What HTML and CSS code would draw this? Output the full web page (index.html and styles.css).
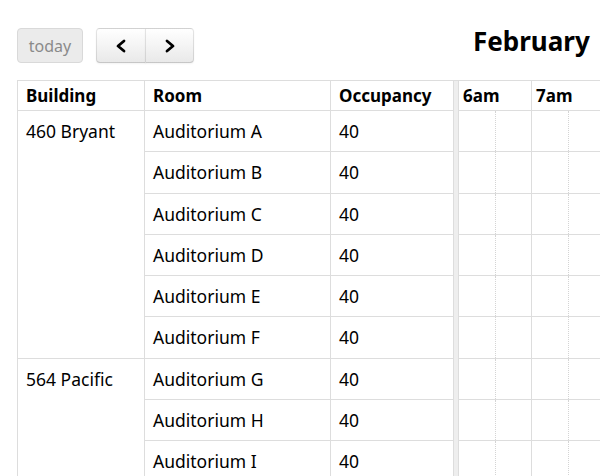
FILE: index.html
```html
<!DOCTYPE html>
<html lang="en">
<head>
    <meta charset="UTF-8">
    <title>Resource Timeline</title>
    <link rel="stylesheet" href="styles.css">
</head>
<body>

    <div class="calendar">
        <div class="toolbar">
            <button class="button today" disabled>today</button>
            <div class="nav-group">
                <button class="button nav prev">
                    <svg width="12" height="14" viewBox="0 0 12 14"><polyline points="9,2 3,7 9,12" /></svg>
                </button>
                <button class="button nav next">
                    <svg width="12" height="14" viewBox="0 0 12 14"><polyline points="3,2 9,7 3,12" /></svg>
                </button>
            </div>
            <h2 class="title">February</h2>
        </div>

        <div class="view">
            <div class="resources">
                <div class="cell head">Building</div>
                <div class="cell head">Room</div>
                <div class="cell head last">Occupancy</div>

                <div class="cell group six">460 Bryant</div>
                <div class="cell">Auditorium A</div><div class="cell last">40</div>
                <div class="cell">Auditorium B</div><div class="cell last">40</div>
                <div class="cell">Auditorium C</div><div class="cell last">40</div>
                <div class="cell">Auditorium D</div><div class="cell last">40</div>
                <div class="cell">Auditorium E</div><div class="cell last">40</div>
                <div class="cell">Auditorium F</div><div class="cell last">40</div>

                <div class="cell group three">564 Pacific</div>
                <div class="cell">Auditorium G</div><div class="cell last">40</div>
                <div class="cell">Auditorium H</div><div class="cell last">40</div>
                <div class="cell">Auditorium I</div><div class="cell last">40</div>
            </div>

            <div class="divider"></div>

            <div class="timeline">
                <div class="time-head">
                    <div class="slot-label">6am</div>
                    <div class="slot-label">7am</div>
                </div>
                <div class="time-row"><div class="slot"></div><div class="slot"></div><div class="slot"></div><div class="slot"></div></div>
                <div class="time-row"><div class="slot"></div><div class="slot"></div><div class="slot"></div><div class="slot"></div></div>
                <div class="time-row"><div class="slot"></div><div class="slot"></div><div class="slot"></div><div class="slot"></div></div>
                <div class="time-row"><div class="slot"></div><div class="slot"></div><div class="slot"></div><div class="slot"></div></div>
                <div class="time-row"><div class="slot"></div><div class="slot"></div><div class="slot"></div><div class="slot"></div></div>
                <div class="time-row"><div class="slot"></div><div class="slot"></div><div class="slot"></div><div class="slot"></div></div>
                <div class="time-row"><div class="slot"></div><div class="slot"></div><div class="slot"></div><div class="slot"></div></div>
                <div class="time-row"><div class="slot"></div><div class="slot"></div><div class="slot"></div><div class="slot"></div></div>
                <div class="time-row"><div class="slot"></div><div class="slot"></div><div class="slot"></div><div class="slot"></div></div>
            </div>
        </div>
    </div>

</body>
</html>
```

FILE: styles.css
```css
/* Calendar look */
:root {
    --border: #ddd;
    --divider: #eee;
    --text: #000;
}

html, body {
    height: 476px;
}

body {
    margin: 0;
    overflow: hidden;
    font-family: "Noto Sans", "DejaVu Sans", sans-serif;
    color: var(--text);
    background: #fff;
}

.calendar {
    padding: 28px 0 0 17px;
}

/* Toolbar */
.toolbar {
    display: flex;
    align-items: flex-start;
    height: 35px;
    margin-bottom: 17px;
    white-space: nowrap;
}

.button {
    box-sizing: border-box;
    height: 35px;
    margin: 0;
    padding: 0 10px;
    font-family: "Noto Sans", "DejaVu Sans", sans-serif;
    font-size: 16px;
    color: #333;
    background: linear-gradient(#fff, #e9e9e9);
    border: 1px solid rgba(0, 0, 0, 0.1);
    border-bottom-color: rgba(0, 0, 0, 0.22);
    border-radius: 4px;
    box-shadow: inset 0 1px 0 rgba(255, 255, 255, 0.2), 0 1px 2px rgba(0, 0, 0, 0.05);
}

.today {
    width: 66px;
    color: #8a8a8a;
    background: #ebebeb;
    border-color: #d9d9d9;
    box-shadow: none;
}

.nav-group {
    display: flex;
    margin-left: 13px;
}

.nav {
    display: flex;
    align-items: center;
    justify-content: center;
    padding: 0;
}

.prev {
    width: 50px;
    border-top-right-radius: 0;
    border-bottom-right-radius: 0;
}

.next {
    width: 49px;
    margin-left: -1px;
    border-top-left-radius: 0;
    border-bottom-left-radius: 0;
}

.nav svg polyline {
    fill: none;
    stroke: #000;
    stroke-width: 2.8;
    stroke-linecap: round;
    stroke-linejoin: round;
}

.title {
    margin: 0 0 0 279px;
    font-size: 26px;
    font-weight: bold;
    line-height: 27px;
}

/* Grid */
.view {
    display: flex;
    width: 760px;
    border-top: 1px solid var(--border);
}

.resources {
    flex: none;
    display: grid;
    grid-template-columns: 127px 186px 122px;
    grid-template-rows: 30px;
    grid-auto-rows: 41.25px;
    border-left: 1px solid var(--border);
}

.cell {
    box-sizing: border-box;
    padding: 8px 8px 0;
    font-size: 17.5px;
    line-height: 24px;
    white-space: nowrap;
    border-right: 1px solid var(--border);
    border-bottom: 1px solid var(--border);
}

.cell.last {
    border-right: none;
}

.cell.head {
    padding-top: 3px;
    font-size: 17px;
    font-weight: bold;
}

.group.six {
    grid-row: span 6;
}

.group.three {
    grid-row: span 3;
}

.divider {
    flex: none;
    box-sizing: border-box;
    width: 6px;
    background: var(--divider);
    border-left: 1px solid var(--border);
    border-right: 1px solid var(--border);
}

.timeline {
    flex: 1;
}

.time-head {
    display: flex;
    box-sizing: border-box;
    height: 30px;
    border-bottom: 1px solid var(--border);
}

.slot-label {
    box-sizing: border-box;
    width: 73px;
    padding: 3px 4px 0;
    font-size: 17px;
    font-weight: bold;
    line-height: 24px;
    border-right: 1px solid var(--border);
}

.time-row {
    display: flex;
    box-sizing: border-box;
    height: 41.25px;
    border-bottom: 1px solid var(--border);
}

.slot {
    box-sizing: border-box;
    width: 37px;
    border-right: 1px dotted #d4d4d4;
}

.slot:nth-child(even) {
    width: 36px;
    border-right: 1px solid var(--border);
}
```
